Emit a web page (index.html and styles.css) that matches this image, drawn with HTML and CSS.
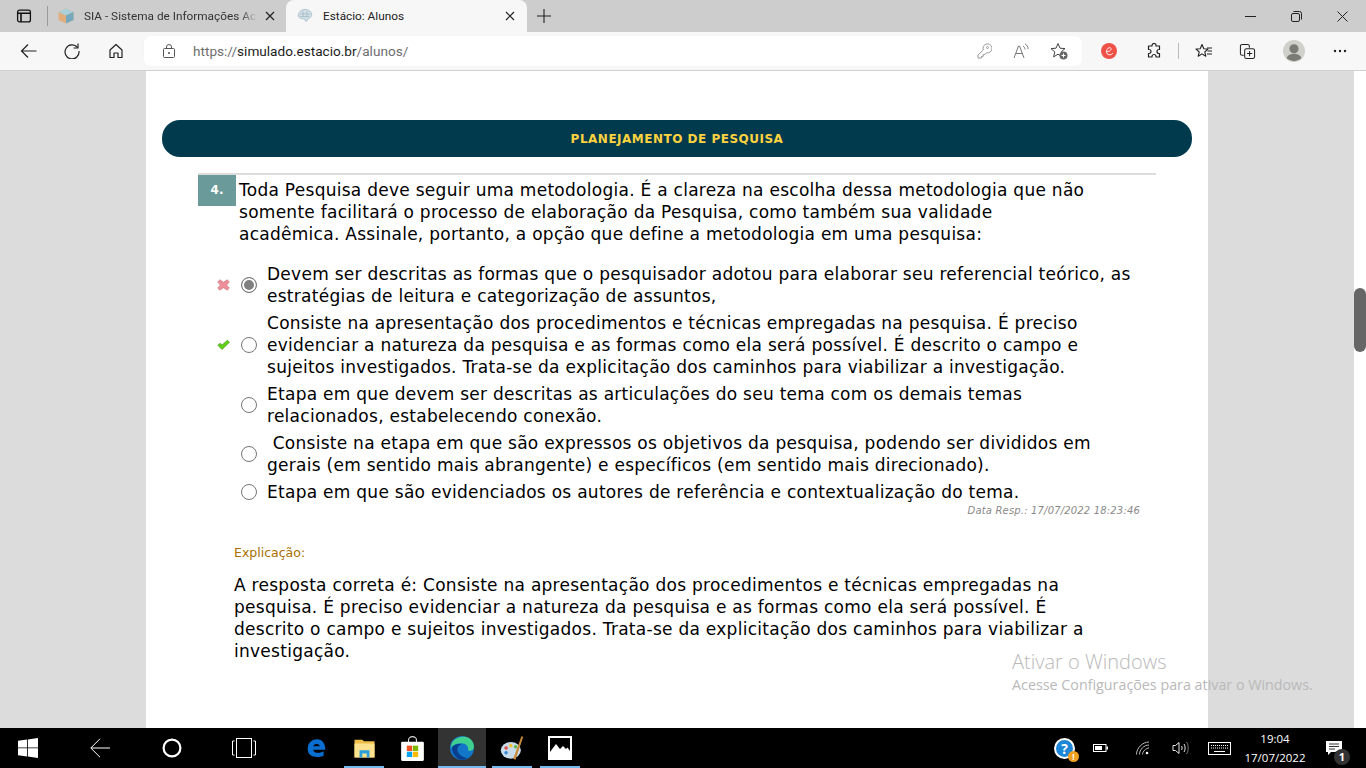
FILE: index.html
```html
<!DOCTYPE html>
<html lang="pt-br">
<head>
  <meta charset="UTF-8" />
  <meta name="viewport" content="width=device-width, initial-scale=1" />
  <title>Estácio: Alunos</title>
  <link rel="stylesheet" href="styles.css">
</head>
<body>

  <div class="tabbar">
    <svg class="tab-actions" width="16" height="16" viewBox="0 0 16 16" fill="none" stroke="#111" stroke-width="1.300"><rect x="1.600" y="2.100" width="12.800" height="11.800" rx="2"/><path d="M1.600 5.200h12.800M5 5.200v8.700" stroke-width="1.600"/></svg>
    <span class="tab-sep"></span>
    <div class="tab">
      <svg class="favicon" width="16" height="16" viewBox="0 0 16 16"><path d="M8 .5 15.500 4v8L8 15.500 .5 12V4z" fill="#dfae7c"/><path d="M8 .5 15.500 4 8 7.500 .5 4z" fill="#a9cfd8"/><path d="M8 7.500 15.500 4v8L8 15.500z" fill="#74a9bd"/></svg>
      <span class="tab-title fade">SIA - Sistema de Informações Ac</span>
      <svg class="tab-close" width="10" height="10" viewBox="0 0 10 10" stroke="#222" stroke-width="1.200"><path d="M1 1l8 8M9 1l-8 8"/></svg>
    </div>
    <div class="tab active">
      <svg class="favicon" width="16" height="16" viewBox="0 0 16 16" fill="#d3e0e6" stroke="#9db6c4" stroke-width=".7"><path d="M4 2.500c2-1.500 6-1.600 8 0 2 .8 3 3 2.600 5-.3 1.800-2 2.800-3.600 3l-1 2.500-1.500 .3-1-2.500c-2 .4-5-.2-6-2-1-2 .5-5 2.500-6.300z"/><path d="M3 6h10M6 3v6M10 3v6M3 8.500h9" fill="none"/></svg>
      <span class="tab-title">Estácio: Alunos</span>
      <svg class="tab-close" width="10" height="10" viewBox="0 0 10 10" stroke="#222" stroke-width="1.200"><path d="M1 1l8 8M9 1l-8 8"/></svg>
    </div>
    <svg class="new-tab" width="14" height="14" viewBox="0 0 14 14" stroke="#222" stroke-width="1.100"><path d="M7 0v14M0 7h14"/></svg>
    <div class="window-btns">
      <svg width="11" height="11" viewBox="0 0 11 11" stroke="#222"><path d="M0 5.500h11"/></svg>
      <svg width="11" height="11" viewBox="0 0 11 11" fill="none" stroke="#222"><rect x=".5" y="2.500" width="8" height="8" rx="1.500"/><path d="M2.500 .5h6a2 2 0 0 1 2 2v6"/></svg>
      <svg width="11" height="11" viewBox="0 0 11 11" stroke="#222"><path d="M.5 .5l10 10M10.500 .5l-10 10"/></svg>
    </div>
  </div>

  <div class="toolbar">
    <svg class="tool back" width="17" height="16" viewBox="0 0 17 16" fill="none" stroke="#222" stroke-width="1.200"><path d="M16.500 8H1.500M8 1.500 1.500 8 8 14.500"/></svg>
    <svg class="tool reload" width="16" height="16" viewBox="0 0 16 16" fill="none" stroke="#222" stroke-width="1.200"><path d="M13.500 4.500A7 7 0 1 0 15 8"/><path d="M14 .5v4.500H9.500"/></svg>
    <svg class="tool home" width="16" height="16" viewBox="0 0 16 16" fill="none" stroke="#222" stroke-width="1.200"><path d="M2 7l6-5.500L14 7v7.500h-4V10H6v4.500H2z" stroke-linejoin="round"/></svg>
    <div class="addressbar">
      <svg class="lock" width="12" height="14" viewBox="0 0 12 14" fill="none" stroke="#555"><rect x=".5" y="4.500" width="11" height="9" rx="1"/><path d="M3.500 4.500V3a2.500 2.500 0 0 1 5 0v1.500"/><circle cx="6" cy="9" r=".6" fill="#555"/></svg>
      <span class="url"><span class="url-dim">https://</span>simulado.estacio.br<span class="url-dim">/alunos/</span></span>
      <div class="address-icons">
        <svg width="15" height="16" viewBox="0 0 15 16" fill="none" stroke="#999" stroke-linejoin="round"><path d="M6 5.500a4.500 4.500 0 1 1 3.500 4.300L8 11.500H6.300v1.800H4.500V15H1v-3l5.300-5z"/><circle cx="10.500" cy="4.500" r="1"/></svg>
        <svg width="16" height="16" viewBox="0 0 16 16" fill="none" stroke="#777"><path d="M1 15 5.500 3h1L11 15M2.700 10.500h6.600"/><path d="M10 3c1.300 .8 2 2 2 3.500M12 .8c2 1.300 3 3 3 5.200"/></svg>
        <svg width="18" height="18" viewBox="0 0 18 18" fill="none" stroke="#444"><path d="M8 1.500l2 4.700 5 .4-3.800 3.300 1.200 5-4.400-2.700-4.400 2.700 1.200-5L1 6.600l5-.4z" stroke-linejoin="round"/><circle cx="13.500" cy="13.500" r="4" fill="#666" stroke="none"/><path d="M13.500 11.500v4M11.500 13.500h4" stroke="#fff"/></svg>
      </div>
    </div>
    <div class="extensions">
      <svg class="ext-c" width="16" height="16" viewBox="0 0 16 16"><circle cx="8" cy="8" r="8" fill="#ee5148"/><path d="M5.500 8.500c2 .5 5-1 4.500-3-.4-1.500-3-1-4 1-1 2.200-.5 5 2 5.300 1.500 .2 3-.5 4-1.800" fill="none" stroke="#fff" stroke-width=".9"/></svg>
      <svg class="ext-puzzle" width="16" height="16" viewBox="0 0 16 16" fill="none" stroke="#222" stroke-width="1.200"><path d="M6 2.500a2 2 0 0 1 4 0V3h3.500v3.500H13a2 2 0 0 0 0 4h.5V14H10v-.5a2 2 0 0 0-4 0v.5H2.500v-3.500H3a2 2 0 0 0 0-4h-.5V3H6z" stroke-linejoin="round"/></svg>
      <span class="tool-sep"></span>
      <svg class="ext-fav" width="17" height="16" viewBox="0 0 17 16" fill="none" stroke="#222" stroke-width="1.100"><path d="M7 1.500l1.800 4.200 4.200.3-3.200 2.900 1 4.300L7 10.900l-3.800 2.300 1-4.300L1 6l4.200-.3z" stroke-linejoin="round"/><path d="M12 5h5M12.500 8h4.500M12 11h5"/></svg>
      <svg class="ext-coll" width="17" height="17" viewBox="0 0 18 18" fill="none" stroke="#222" stroke-width="1.100"><path d="M5 13H3.500A2 2 0 0 1 1.500 11V3.500A2 2 0 0 1 3.500 1.500H9a2 2 0 0 1 2 2V5"/><rect x="6" y="6" width="10.500" height="10.500" rx="2"/><path d="M11.200 8.500v5.500M8.500 11.200h5.500"/></svg>
      <svg class="avatar" width="22" height="22" viewBox="0 0 24 24"><circle cx="12" cy="12" r="12" fill="#d0d0ca"/><circle cx="12" cy="9.500" r="5" fill="#7b7b76"/><path d="M4 20c1-4 5-5 8-5s7 1 8 5a12 12 0 0 1-16 0z" fill="#7b7b76"/></svg>
      <svg class="more" width="14" height="4" viewBox="0 0 14 4" fill="#222"><circle cx="2" cy="2" r="1.200"/><circle cx="7" cy="2" r="1.200"/><circle cx="12" cy="2" r="1.200"/></svg>
    </div>
  </div>

  <div class="viewport">
    <main class="page">
      <div class="banner">PLANEJAMENTO DE PESQUISA</div>

      <section class="question">
        <div class="question-head">
          <span class="number">4.</span>
          <p class="statement">Toda Pesquisa deve seguir uma metodologia. É a clareza na escolha dessa metodologia que não<br>somente facilitará o processo de elaboração da Pesquisa, como também sua validade<br>acadêmica. Assinale, portanto, a opção que define a metodologia em uma pesquisa:</p>
        </div>

        <div class="options">
          <div class="option">
            <svg class="mark" width="13" height="12" viewBox="0 0 13 12"><path d="M2.800 .8 6.500 3.300 10.200 .8 12.300 2.900 9.600 6 12.300 9.100 10.200 11.200 6.500 8.700 2.800 11.200 .7 9.100 3.400 6 .7 2.900z" fill="#ee8f9a" stroke="#c0707a" stroke-width=".6"/></svg>
            <span class="radio checked"></span>
            <p>Devem ser descritas as formas que o pesquisador adotou para elaborar seu referencial teórico, as<br>estratégias de leitura e categorização de assuntos,</p>
          </div>
          <div class="option">
            <svg class="mark" width="13" height="12" viewBox="0 0 13 12"><path d="M.8 6.300 3 4.200 5 6 10.400 1.300 12.500 3.300 5 10.500z" fill="#62d016" stroke="#3c8f12" stroke-width=".6"/></svg>
            <span class="radio"></span>
            <p>Consiste na apresentação dos procedimentos e técnicas empregadas na pesquisa. É preciso<br>evidenciar a natureza da pesquisa e as formas como ela será possível. É descrito o campo e<br>sujeitos investigados. Trata-se da explicitação dos caminhos para viabilizar a investigação.</p>
          </div>
          <div class="option">
            <span class="mark"></span>
            <span class="radio"></span>
            <p>Etapa em que devem ser descritas as articulações do seu tema com os demais temas<br>relacionados, estabelecendo conexão.</p>
          </div>
          <div class="option">
            <span class="mark"></span>
            <span class="radio"></span>
            <p>&nbsp;Consiste na etapa em que são expressos os objetivos da pesquisa, podendo ser divididos em<br>gerais (em sentido mais abrangente) e específicos (em sentido mais direcionado).</p>
          </div>
          <div class="option">
            <span class="mark"></span>
            <span class="radio"></span>
            <p>Etapa em que são evidenciados os autores de referência e contextualização do tema.</p>
          </div>
        </div>

        <div class="answer-date">Data Resp.: 17/07/2022 18:23:46</div>

        <div class="explanation">
          <div class="explanation-label">Explicação:</div>
          <p>A resposta correta é: Consiste na apresentação dos procedimentos e técnicas empregadas na<br>pesquisa. É preciso evidenciar a natureza da pesquisa e as formas como ela será possível. É<br>descrito o campo e sujeitos investigados. Trata-se da explicitação dos caminhos para viabilizar a<br>investigação.</p>
        </div>
      </section>
    </main>
    <div class="gutter"></div>
    <div class="scrollbar"><span class="thumb"></span></div>
    <div class="watermark">
      <div class="wm-title">Ativar o Windows</div>
      <div class="wm-sub">Acesse Configurações para ativar o Windows.</div>
    </div>
  </div>

  <footer class="taskbar">
    <svg class="task-start" width="20" height="20" viewBox="0 0 17 17" fill="#fff"><path d="M0 2.400 7.700 1.300V8H0zM8.400 1.200 17 0v8H8.400zM0 8.700h7.700v7L0 14.600zM8.400 8.700H17V17l-8.600-1.200z"/></svg>
    <svg class="task-back" width="20" height="20" viewBox="0 0 20 20" fill="none" stroke="#fff"><path d="M20 10H1M10 .8 .8 10 10 19.200"/></svg>
    <svg class="task-search" width="20" height="20" viewBox="0 0 20 20" fill="none" stroke="#fff" stroke-width="2.200"><circle cx="10" cy="10" r="8.400"/></svg>
    <svg class="task-view" width="24" height="20" viewBox="0 0 24 20" fill="none" stroke="#fff"><rect x="4.500" y=".5" width="15" height="19"/><path d="M2.500 3H.5v14h2M21.500 3h2v14h-2"/></svg>
    <div class="task-apps">
      <span class="app"><svg width="21" height="22" viewBox="0 0 18 20"><path d="M1 11C1 5 5 2 9.500 2S17 5.500 17 11.500H6c.3 3 4.500 4 9.500 1.500v4c-6 2.500-14.500 1.500-14.500-6zM6 8.500h6C11.800 5.500 6.500 5.500 6 8.500z" fill="#0a6fd0"/></svg></span>
      <span class="app open"><svg width="21" height="20" viewBox="0 0 18 18"><path d="M0 1.500h7l1.500 1.500H18v14.500H0z" fill="#f0c04a"/><path d="M0 5h18v12.500H0z" fill="#fde28f"/><path d="M4.500 11h9v6.500H11V14H7v3.500H4.500z" fill="#2d9fd8"/></svg></span>
      <span class="app"><svg width="23" height="25" viewBox="0 0 20 22"><path d="M6.500 6V3.500a3.500 3 0 0 1 7 0V6" fill="none" stroke="#ddd"/><rect y="5" width="20" height="17" rx="1" fill="#fff"/><rect x="5" y="8.500" width="4.700" height="4.700" fill="#f25022"/><rect x="10.300" y="8.500" width="4.700" height="4.700" fill="#7fba00"/><rect x="5" y="13.800" width="4.700" height="4.700" fill="#00a4ef"/><rect x="10.300" y="13.800" width="4.700" height="4.700" fill="#ffb900"/></svg></span>
      <span class="app open focused"><svg width="24" height="24" viewBox="0 0 20 20"><circle cx="10" cy="10" r="10" fill="#1377c9"/><path d="M1 7C3 1.500 9 0 13 .7c4 .8 7 4.300 7 8.300 0 3-3 4-5 3 .8-3-1.500-6-5.500-6C6 6 3 7 1 10z" fill="#3fcf8e"/><path d="M10 7c-3 0-4.500 3-3.500 6 1 2.500 4 5 8 5.500-3 2-6 1.500-8.500 0C3 16 1 12 2 9c1.500-2 5-3 8-2z" fill="#0a3f8f"/></svg></span>
      <span class="app open"><svg width="24" height="26" viewBox="0 0 20 22"><ellipse cx="9" cy="13" rx="8.500" ry="7" fill="#c9dcec"/><circle cx="5" cy="11" r="1.500" fill="#e04b3f"/><circle cx="9" cy="9" r="1.500" fill="#f2c230"/><circle cx="13" cy="10" r="1.500" fill="#5fb648"/><circle cx="5" cy="15" r="1.500" fill="#3a86d1"/><path d="M11 20 18 1l1.500 .5L13 21z" fill="#c98a3a"/></svg></span>
      <span class="app open"><svg width="24" height="24" viewBox="0 0 24 24"><rect x="1" y="1" width="22" height="22" fill="#000" stroke="#fff" stroke-width="2"/><path d="M2 22v-6l6-8 4 5 3-3 3 3 1.500-1.500L22 15v7z" fill="#fff"/></svg></span>
    </div>
    <div class="tray">
      <span class="tray-help"><span class="help-q">?</span><span class="help-badge">!</span></span>
      <svg class="tray-battery" width="15" height="8" viewBox="0 0 15 8"><rect x=".5" y=".5" width="12.500" height="7" fill="none" stroke="#fff"/><rect x="2" y="2" width="7" height="4" fill="#fff"/><rect x="13.500" y="2.500" width="1.500" height="3" fill="#fff"/></svg>
      <svg class="tray-wifi" width="15" height="14" viewBox="0 0 14 14" fill="none" stroke="#bbb"><path d="M1 13.500C1 7 7 1 13.500 1M4 13.500c0-5 4.500-9.500 9.500-9.500M7 13.500c0-3 3.500-6.500 6.500-6.500"/><circle cx="11.500" cy="12" r="1.300" fill="#fff" stroke="none"/></svg>
      <svg class="tray-sound" width="17" height="14" viewBox="0 0 17 14" fill="none" stroke="#fff" stroke-width=".9"><path d="M1 4.500h2.500L7 1.500v11L3.500 9.500H1z"/><path d="M9.500 5c.8 1 .8 3 0 4M12 3c1.500 2 1.500 6 0 8"/><path d="M14.500 1c2.300 3 2.300 9 0 12" stroke="#888"/></svg>
      <svg class="tray-keyboard" width="23" height="13" viewBox="0 0 23 13" fill="none" stroke="#fff"><rect x=".5" y=".5" width="22" height="12"/><path d="M3 3.500h17M3 6h17" stroke-dasharray="1 1"/><path d="M6 9.500h11"/></svg>
      <div class="clock"><div>19:04</div><div>17/07/2022</div></div>
      <span class="notify"><svg width="16" height="15" viewBox="0 0 16 15" fill="#fff"><path d="M0 0h16v11H5l-3 3v-3H0z"/><path d="M3 3h10M3 5.500h10M3 8h6" stroke="#333"/></svg><span class="notify-count">1</span></span>
    </div>
  </footer>

</body>
</html>
```

FILE: styles.css
```css
* {
  margin: 0;
  padding: 0;
  box-sizing: border-box;
}

body {
  width: 1366px;
  height: 768px;
  overflow: hidden;
  display: flex;
  flex-direction: column;
  font-family: 'DejaVu Sans', Verdana, sans-serif;
  color: #000;
  background: #dcdcdc;
}

p {
  font-size: 17px;
  line-height: 22px;
  letter-spacing: 0.27px;
  white-space: nowrap;
}

svg {
  display: block;
  flex: none;
}

/* browser tabs */
.tabbar {
  height: 32px;
  background: #cdcdcd;
  display: flex;
  align-items: flex-end;
  font-family: 'Roboto', 'Liberation Sans', sans-serif;
  font-size: 11.800px;
  color: #222;
}

.tab-actions {
  margin: 0 0 8px 16px;
}

.tab-sep {
  width: 1px;
  height: 20px;
  background: #999;
  margin: 0 10px 6px 15px;
}

.tab {
  width: 228px;
  height: 32px;
  display: flex;
  align-items: center;
  padding-right: 11px;
  border-radius: 8px 8px 0 0;
}

.tab.active {
  width: 241px;
  background: #f7f7f7;
  padding: 0 12px 0 11px;
}

.tab-title {
  flex: 1;
  margin-left: 10px;
  white-space: nowrap;
}

.tab-title.fade {
  color: #333;
  -webkit-mask-image: linear-gradient(90deg, #000 90%, transparent);
  mask-image: linear-gradient(90deg, #000 90%, transparent);
}

.tab-close {
  margin-left: 8px;
}

.new-tab {
  margin: 0 0 9px 10px;
}

.window-btns {
  margin-left: auto;
  margin-bottom: 10px;
  display: flex;
  gap: 35px;
  padding-right: 18px;
}

/* browser toolbar */
.toolbar {
  height: 39px;
  background: #f7f7f7;
  border-bottom: 1px solid #d0d0d0;
  display: flex;
  align-items: center;
  font-family: 'Roboto', 'Liberation Sans', sans-serif;
}

.tool.back {
  margin-left: 20px;
}

.tool.reload {
  margin-left: 27px;
}

.tool.home {
  margin-left: 28px;
}

.addressbar {
  width: 938px;
  height: 30px;
  margin-left: 20px;
  background: #fff;
  border-radius: 6px;
  display: flex;
  align-items: center;
  padding: 0 14px 0 19px;
  box-shadow: 0 0 1px rgba(0,0,0,0.08);
}

.url {
  margin-left: 18px;
  font-size: 13.600px;
  color: #1c1c1c;
}

.url-dim {
  color: #6e6e6e;
}

.address-icons {
  margin-left: auto;
  display: flex;
  align-items: center;
  gap: 21px;
}

.extensions {
  display: flex;
  align-items: center;
  margin-left: 19px;
}

.ext-puzzle {
  margin-left: 29px;
}

.tool-sep {
  width: 1px;
  height: 16px;
  background: #bbb;
  margin-left: 16px;
}

.ext-fav {
  margin-left: 16px;
}

.ext-coll {
  margin-left: 27px;
}

.avatar {
  margin-left: 27px;
}

.more {
  margin-left: 28px;
}

/* page */
.viewport {
  flex: 1;
  display: flex;
  position: relative;
  background: #dcdcdc;
  padding-left: 146px;
  overflow: hidden;
}

.page {
  width: 1062px;
  background: #fff;
  padding: 49px 16px 0;
}

.gutter {
  flex: 1;
}

.scrollbar {
  width: 12px;
  background: #fff;
  padding-top: 217px;
}

.thumb {
  display: block;
  height: 64px;
  background: #666;
  border-radius: 6px;
}

.banner {
  height: 37px;
  width: 1030px;
  border-radius: 18px;
  background: #003a4c;
  color: #ffd23f;
  font-size: 12px;
  letter-spacing: 0.5px;
  font-weight: bold;
  line-height: 39px;
  text-align: center;
}

.question {
  margin: 16px 0 0 36px;
  width: 958px;
  border-top: 2px solid #dcdcdc;
}

.question-head {
  display: flex;
  align-items: flex-start;
}

.number {
  width: 38px;
  height: 31px;
  background: #6a9a9a;
  color: #fff;
  font-size: 12px;
  font-weight: bold;
  line-height: 31px;
  text-align: center;
  margin-right: 3px;
}

.statement {
  padding-top: 4px;
}

.options {
  margin: 18px 0 0 19px;
  display: flex;
  flex-direction: column;
  gap: 5px;
}

.option {
  display: flex;
  align-items: center;
}

.mark {
  width: 13px;
  height: 12px;
}

.radio {
  width: 16px;
  height: 16px;
  border: 1.500px solid #767676;
  border-radius: 50%;
  margin: 0 10px 0 11px;
  background: #fff;
  flex: none;
}

.radio.checked {
  background: #808080;
  box-shadow: inset 0 0 0 2px #fff;
}

.answer-date {
  width: 942px;
  text-align: right;
  font-size: 10px;
  letter-spacing: 0.17px;
  font-style: italic;
  color: #8a8a8a;
  line-height: 12px;
  margin-top: 2px;
}

.explanation {
  margin: 28px 0 0 36px;
}

.explanation-label {
  font-size: 12.500px;
  line-height: 16px;
  color: #a86f00;
  margin-bottom: 13px;
}

/* activation notice */
.watermark {
  position: absolute;
  left: 1012px;
  top: 578px;
  font-family: 'Open Sans', 'Liberation Sans', sans-serif;
  color: #b9b9b9;
}

.wm-title {
  font-size: 20px;
  line-height: 26px;
  font-weight: 300;
}

.wm-sub {
  font-size: 14.300px;
  line-height: 20px;
}

/* windows taskbar */
.taskbar {
  height: 40px;
  background: #000;
  display: flex;
  align-items: center;
  color: #fff;
  font-family: 'Open Sans', 'Liberation Sans', sans-serif;
}

.task-start {
  margin-left: 18px;
}

.task-back {
  margin-left: 52px;
}

.task-search {
  margin-left: 52px;
}

.task-view {
  margin-left: 50px;
}

.task-apps {
  display: flex;
  margin-left: 36px;
}

.app {
  position: relative;
  width: 48px;
  height: 40px;
  display: flex;
  align-items: center;
  justify-content: center;
}

.app.open::after {
  content: '';
  position: absolute;
  left: 4px;
  right: 4px;
  bottom: 0;
  height: 2px;
  background: #76b9ed;
}

.app.focused {
  background: #333;
  margin: 0 2px;
}

.app.focused::after {
  left: 0;
  right: 0;
}

.tray {
  margin-left: auto;
  display: flex;
  align-items: center;
  height: 40px;
  padding-right: 24px;
}

.tray-help {
  position: relative;
  width: 21px;
  height: 21px;
  border-radius: 50%;
  background: #1e86d6;
  border: 2px solid #fff;
  text-align: center;
  font-size: 14px;
  font-weight: bold;
  line-height: 17px;
}

.help-badge {
  position: absolute;
  right: -6px;
  bottom: -5px;
  width: 11px;
  height: 11px;
  border-radius: 50%;
  background: #f0a020;
  font-size: 8px;
  line-height: 11px;
}

.tray-battery {
  margin-left: 18px;
}

.tray-wifi {
  margin-left: 27px;
}

.tray-sound {
  margin-left: 22px;
}

.tray-keyboard {
  margin-left: 19px;
}

.clock {
  width: 78px;
  margin-left: 5px;
  text-align: center;
  font-size: 11.500px;
  line-height: 19px;
}

.notify {
  position: relative;
  margin-left: 12px;
}

.notify-count {
  position: absolute;
  right: -8px;
  bottom: -9px;
  width: 16px;
  height: 16px;
  border-radius: 50%;
  background: #333;
  font-size: 11px;
  font-weight: bold;
  line-height: 16px;
  text-align: center;
}
```
